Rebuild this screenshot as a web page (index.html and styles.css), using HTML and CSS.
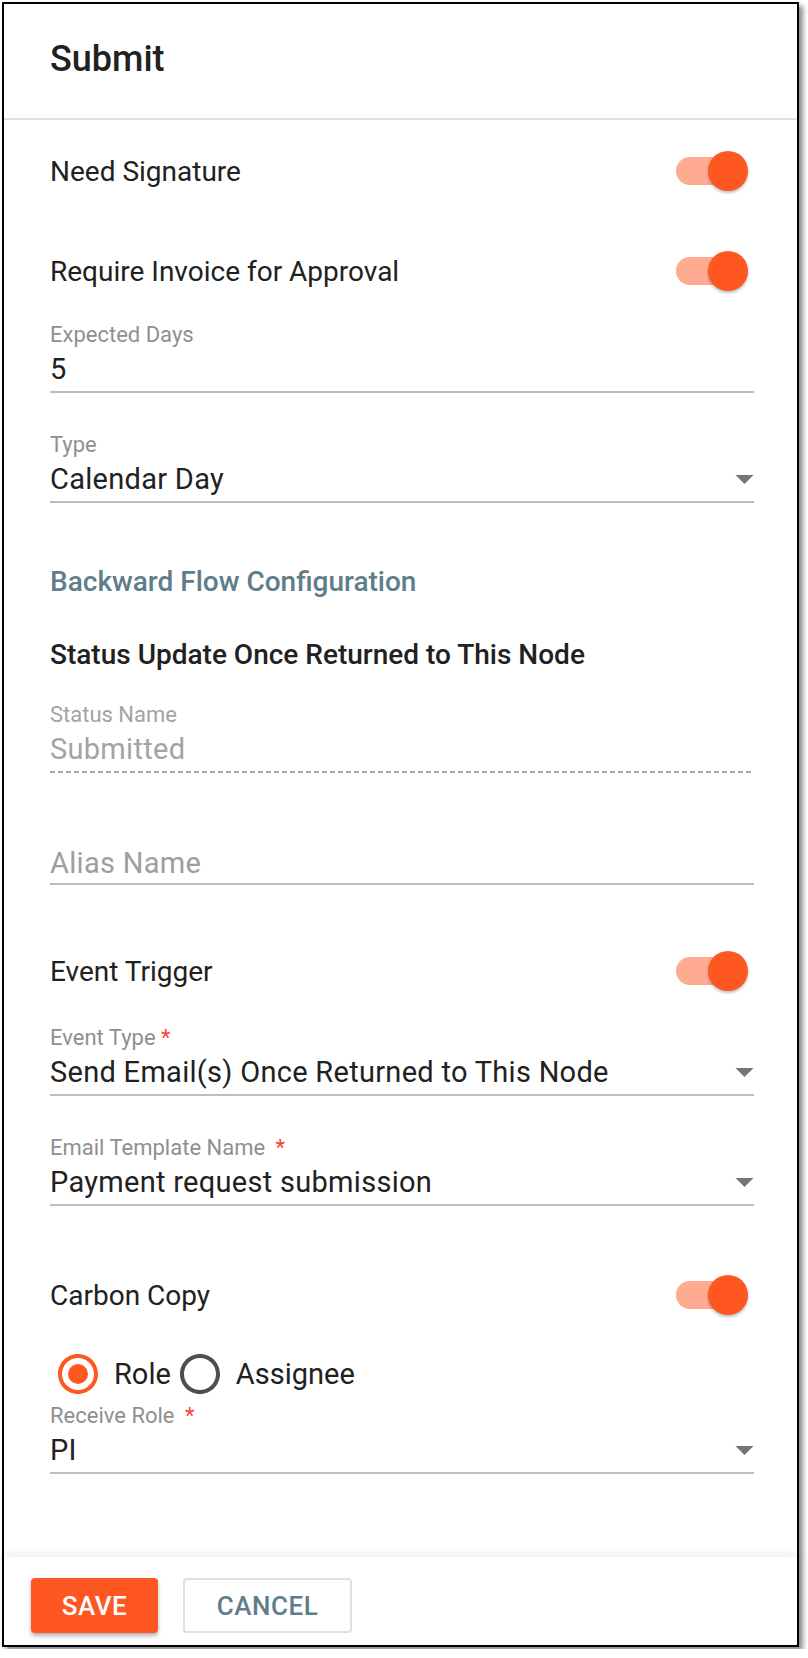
FILE: index.html
```html
<!DOCTYPE html>
<html lang="en">
<head>
    <meta charset="UTF-8">
    <meta name="viewport" content="width=device-width, initial-scale=1.0">
    <title>Submit</title>
    <link rel="stylesheet" href="styles.css">
</head>
<body>

    <div class="dialog">
        <div class="dialog-header">
            <h2>Submit</h2>
        </div>

        <div class="dialog-body">
            <div class="switch-row first">
                <span>Need Signature</span>
                <span class="switch"><span class="track"></span><span class="thumb"></span></span>
            </div>
            <div class="switch-row next">
                <span>Require Invoice for Approval</span>
                <span class="switch"><span class="track"></span><span class="thumb"></span></span>
            </div>

            <div class="field after-switch">
                <div class="field-label">Expected Days</div>
                <div class="field-value">5</div>
            </div>
            <div class="field">
                <div class="field-label">Type</div>
                <div class="field-value select">
                    <span>Calendar Day</span>
                    <svg class="arrow" viewBox="7 10 10 5"><path d="M7 10l5 5 5-5z"/></svg>
                </div>
            </div>

            <h3 class="section-title">Backward Flow Configuration</h3>
            <h4 class="sub-title">Status Update Once Returned to This Node</h4>

            <div class="field disabled after-title">
                <div class="field-label">Status Name</div>
                <div class="field-value">Submitted</div>
            </div>
            <div class="field no-label after-disabled">
                <div class="field-label"></div>
                <div class="field-value placeholder">Alias Name</div>
            </div>

            <div class="switch-row after-field">
                <span>Event Trigger</span>
                <span class="switch"><span class="track"></span><span class="thumb"></span></span>
            </div>

            <div class="field after-switch-sm">
                <div class="field-label">Event Type <span class="req">*</span></div>
                <div class="field-value select">
                    <span>Send Email(s) Once Returned to This Node</span>
                    <svg class="arrow" viewBox="7 10 10 5"><path d="M7 10l5 5 5-5z"/></svg>
                </div>
            </div>
            <div class="field">
                <div class="field-label">Email Template Name <span class="req wide">*</span></div>
                <div class="field-value select">
                    <span>Payment request submission</span>
                    <svg class="arrow" viewBox="7 10 10 5"><path d="M7 10l5 5 5-5z"/></svg>
                </div>
            </div>

            <div class="switch-row after-field-lg">
                <span>Carbon Copy</span>
                <span class="switch"><span class="track"></span><span class="thumb"></span></span>
            </div>

            <div class="radio-group">
                <label class="radio checked">
                    <svg viewBox="0 0 24 24"><path d="M12 2C6.48 2 2 6.48 2 12s4.48 10 10 10 10-4.48 10-10S17.52 2 12 2zm0 18c-4.42 0-8-3.58-8-8s3.58-8 8-8 8 3.58 8 8-3.58 8-8 8z"/><circle cx="12" cy="12" r="5"/></svg>
                    <span>Role</span>
                </label>
                <label class="radio">
                    <svg viewBox="0 0 24 24"><path d="M12 2C6.48 2 2 6.48 2 12s4.48 10 10 10 10-4.48 10-10S17.52 2 12 2zm0 18c-4.42 0-8-3.58-8-8s3.58-8 8-8 8 3.58 8 8-3.58 8-8 8z"/></svg>
                    <span>Assignee</span>
                </label>
            </div>

            <div class="field after-radio">
                <div class="field-label">Receive Role <span class="req wide">*</span></div>
                <div class="field-value select">
                    <span>PI</span>
                    <svg class="arrow" viewBox="7 10 10 5"><path d="M7 10l5 5 5-5z"/></svg>
                </div>
            </div>
        </div>

        <div class="dialog-footer">
            <button class="btn btn-save">SAVE</button>
            <button class="btn btn-cancel">CANCEL</button>
        </div>
    </div>

</body>
</html>
```

FILE: styles.css
```css
body {
    font-family: Roboto, "Liberation Sans", sans-serif;
    margin: 0;
    padding: 0;
    background-color: #fff;
    color: #212121;
}
.dialog {
    margin: 2px;
    width: 797px;
    height: 1645px;
    box-sizing: border-box;
    border: 2px solid #000;
    background: #fff;
    box-shadow: 4px 4px 5px rgba(0,0,0,0.45);
    display: flex;
    flex-direction: column;
}
.dialog-header {
    height: 116px;
    padding: 35px 0 0 46px;
    box-sizing: border-box;
    border-bottom: 2px solid #e0e0e0;
}
.dialog-header h2 {
    margin: 0;
    font-size: 36px;
    line-height: 40px;
    font-weight: 500;
}
.dialog-body {
    flex: 1;
    padding: 0 43px 0 46px;
}

/* switches */
.switch-row {
    height: 60px;
    display: flex;
    align-items: center;
    justify-content: space-between;
    padding-right: 6px;
    font-size: 28px;
}
.switch-row.first { margin-top: 21px; }
.switch-row.next { margin-top: 40px; }
.switch-row.after-field { margin-top: 56px; }
.switch-row.after-field-lg { margin-top: 59px; }
.switch {
    position: relative;
    width: 72px;
    height: 40px;
}
.switch .track {
    position: absolute;
    left: 0;
    top: 6px;
    width: 68px;
    height: 28px;
    border-radius: 14px;
    background: #ffab91;
}
.switch .thumb {
    position: absolute;
    right: 0;
    top: 0;
    width: 40px;
    height: 40px;
    border-radius: 50%;
    background: #ff5722;
    box-shadow: 0 2px 3px rgba(0,0,0,0.25);
}

/* text fields */
.field {
    margin-top: 38px;
    padding-bottom: 2px;
    border-bottom: 2px solid #bdbdbd;
}
.field.after-switch { margin-top: 20px; }
.field.after-title { margin-top: 26px; }
.field.after-disabled { margin-top: 42px; }
.field.after-switch-sm { margin-top: 23px; }
.field.after-radio { margin-top: 6px; }
.field.no-label { padding-bottom: 0; }
.field-label {
    height: 28px;
    line-height: 28px;
    font-size: 22px;
    color: #8f8f8f;
}
.field-value {
    height: 40px;
    line-height: 40px;
    font-size: 29px;
    letter-spacing: 0.01em;
}
.field-value.select {
    display: flex;
    align-items: center;
    justify-content: space-between;
}
.field-value.placeholder {
    color: #9e9e9e;
}
.arrow {
    width: 19px;
    height: 9px;
    fill: #757575;
}
.req {
    color: #f44336;
}
.req.wide {
    margin-left: 5px;
}
.field.disabled {
    border-bottom: none;
    padding-bottom: 4px;
    background-image: repeating-linear-gradient(to right, #a8a8a8 0, #a8a8a8 5px, transparent 5px, transparent 8px);
    background-size: 100% 2px;
    background-position: bottom;
    background-repeat: no-repeat;
}
.field.disabled .field-label {
    color: #a3a3a3;
}
.field.disabled .field-value {
    color: #a3a3a3;
}

/* headings */
.section-title {
    margin: 59px 0 0;
    height: 40px;
    line-height: 40px;
    font-size: 28px;
    font-weight: 500;
    color: #607d8b;
}
.sub-title {
    margin: 33px 0 0;
    height: 40px;
    line-height: 40px;
    font-size: 28px;
    font-weight: 500;
}

/* radios */
.radio-group {
    margin-top: 27px;
    height: 44px;
    display: flex;
    align-items: center;
    font-size: 29px;
}
.radio {
    display: flex;
    align-items: center;
}
.radio svg {
    width: 48px;
    height: 48px;
    fill: #4a4e55;
    margin: 0 12px 0 4px;
}
.radio.checked svg {
    fill: #ff5722;
}
.radio + .radio svg {
    margin-left: 5px;
}

/* footer */
.dialog-footer {
    height: 88px;
    padding: 21px 0 0 27px;
    box-sizing: border-box;
    box-shadow: 0 -4px 8px rgba(0,0,0,0.06);
    display: flex;
    align-items: flex-start;
    gap: 25px;
}
.btn {
    height: 55px;
    font-family: Roboto, "Liberation Sans", sans-serif;
    font-size: 26px;
    font-weight: 500;
    letter-spacing: 0.02em;
    border-radius: 4px;
    cursor: pointer;
}
.btn-save {
    width: 127px;
    background: #ff5722;
    color: #fff;
    border: none;
    box-shadow: 0 3px 4px rgba(0,0,0,0.3);
}
.btn-cancel {
    width: 169px;
    background: #fff;
    color: #607d8b;
    border: 2px solid #e0e0e0;
}
```
